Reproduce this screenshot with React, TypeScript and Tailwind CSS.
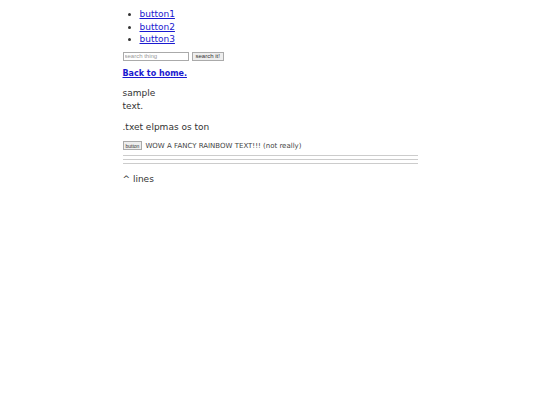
export default function App() {
  return (
    <div className="w-[540px] h-[405px] bg-white">
      <div className="mx-auto w-[295px] pt-[8px] text-[9px] leading-[12.5px] text-[#333]" style={{ fontFamily: '"DejaVu Sans", Verdana, sans-serif' }}>
        <ul className="list-disc pl-[17px] m-0">
          <li><a className="text-[#1a1ad0] underline" href="#">button1</a></li>
          <li><a className="text-[#1a1ad0] underline" href="#">button2</a></li>
          <li><a className="text-[#1a1ad0] underline" href="#">button3</a></li>
        </ul>
        <div className="mt-[6px] flex items-center gap-[3px]">
          <input className="w-[66px] h-[9px] border border-[#aaa] px-[1px] text-[6px] leading-[7px] text-[#999] placeholder:text-[#999]" placeholder="search thing" style={{ fontFamily: '"Liberation Sans", Arial, sans-serif' }} />
          <button className="h-[9px] border border-[#aaa] bg-[#eee] px-[3px] text-[6px] leading-[7px] text-[#333]" style={{ fontFamily: '"Liberation Sans", Arial, sans-serif' }}>search it!</button>
        </div>
        <div className="mt-[6px]"><a className="text-[#1a1ad0] underline font-bold text-[8px]" href="#">Back to home.</a></div>
        <div className="mt-[7px]">sample<br />text.</div>
        <div className="mt-[9px]">.txet elpmas os ton</div>
        <div className="mt-[6px] flex items-center gap-[3px] text-[7px] text-[#444]">
          <button className="h-[9px] border border-[#aaa] bg-[#eee] px-[2px] text-[5px] leading-[6px] text-[#333]" style={{ fontFamily: '"Liberation Sans", Arial, sans-serif' }}>button</button>
          <span>WOW A FANCY RAINBOW TEXT!!! (not really)</span>
        </div>
        <div className="mt-[3px] border-t border-[#ccc]"></div>
        <div className="mt-[3px] border-t border-[#ccc]"></div>
        <div className="mt-[3px] border-t border-[#ccc]"></div>
        <div className="mt-[9px]">^ lines</div>
      </div>
    </div>
  );
}
